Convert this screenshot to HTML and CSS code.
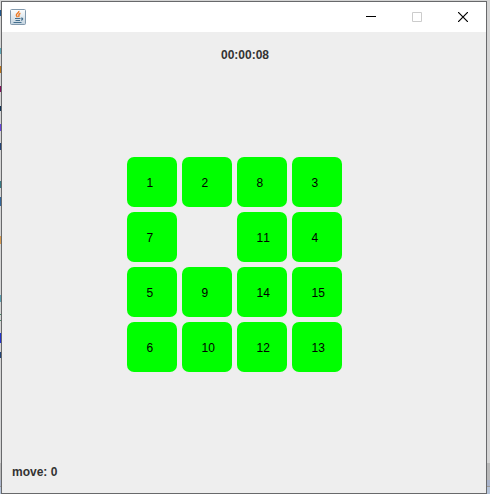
FILE: index.html
```html
<!DOCTYPE html>
<html lang="en">
<head>
<meta charset="utf-8">
<title>Puzzle</title>
<link rel="stylesheet" href="styles.css">
</head>
<body>
<div class="window">
  <header class="titlebar">
    <svg class="app-icon" viewBox="0 0 16 16" aria-hidden="true">
      <defs><linearGradient id="plate" x1="0" y1="0" x2="0" y2="1"><stop offset="0" stop-color="#fdfefe"/><stop offset="1" stop-color="#c3d3df"/></linearGradient></defs>
      <rect x=".5" y=".5" width="15" height="15" rx="1" fill="url(#plate)" stroke="#8299ad"/>
      <path d="M8.800 2c.5 2-3 2.600-2.400 4.400.2.700.8 1.200 1 1.900M10.400 4.200C7.500 5.500 9.900 6.200 8.500 8" fill="none" stroke="#ee7a26" stroke-width="1.500"/>
      <path d="M5 9.500h5.500M5.500 11.500h4.500M3.500 13.500h8M11 9.200c2.500-.6 2 1.600 0 2.100" fill="none" stroke="#44708f" stroke-width="1.100"/>
    </svg>
    <div class="controls">
      <button class="control" aria-label="Minimize"><svg class="glyph" viewBox="0 0 10 10"><path d="M0 4.500h10" stroke="#000"/></svg></button>
      <button class="control" aria-label="Maximize" disabled><svg class="glyph" viewBox="0 0 10 10"><path d="M.5.5h9v9h-9z" fill="none" stroke="#ccc"/></svg></button>
      <button class="control" aria-label="Close"><svg class="glyph" viewBox="0 0 10 10"><path d="M0 0l10 10M10 0L0 10" stroke="#000" stroke-width="1.200"/></svg></button>
    </div>
  </header>
  <main class="game">
    <div class="timer">00:00:08</div>
    <div class="board">
      <button class="tile">1</button>
      <button class="tile">2</button>
      <button class="tile">8</button>
      <button class="tile">3</button>
      <button class="tile">7</button>
      <span class="gap"></span>
      <button class="tile">11</button>
      <button class="tile">4</button>
      <button class="tile">5</button>
      <button class="tile">9</button>
      <button class="tile">14</button>
      <button class="tile">15</button>
      <button class="tile">6</button>
      <button class="tile">10</button>
      <button class="tile">12</button>
      <button class="tile">13</button>
    </div>
    <div class="moves">move: 0</div>
  </main>
</div>
</body>
</html>
```

FILE: styles.css
```css
* {
  box-sizing: border-box;
}

/* Desktop behind the window: slivers of an editor on the left, a panel on the right */
body {
  margin: 0;
  min-height: 100vh;
  padding: 1px 3px 0 1px;
  display: flex;
  font-family: "Liberation Sans", Arial, sans-serif;
  font-size: 12px;
  line-height: 14px;
  font-kerning: none;
  color: #333;
  background:
    linear-gradient(#0000 10px, #258 10px 16px, #0000 16px 48px, #5ba5b5 48px 54px,
      #0000 54px 66px, #b87318 66px 73px, #0000 73px 86px, #80105a 86px 92px,
      #0000 92px 106px, #135 106px 111px, #0000 111px 124px, #64d 124px 131px,
      #0000 131px 143px, #247 143px 150px, #0000 150px 181px, #367883 181px 188px,
      #0000 188px 197px, #369 197px 206px, #0000 206px 236px, #d79b50 236px 244px,
      #0000 244px 295px, #5b9eb0 295px 302px, #0000 302px 314px, #486 314px 315px,
      #0000 315px 320px, #486 320px 321px, #0000 321px 333px, #23c 333px 343px,
      #0000 343px 352px, #247 352px 358px, #0000 358px) left top / 2px 100% no-repeat,
    linear-gradient(#d4d4d4 463px, #b8b8b8 463px 480px, #aab4cb 480px 486px, #999 486px 487px, #b4c3d9 487px);
}

.window {
  flex: 1;
  display: flex;
  flex-direction: column;
  border: 1px solid #68696b;
  background: #eee;
}

.titlebar {
  display: flex;
  align-items: center;
  justify-content: space-between;
  height: 30px;
  padding-left: 8px;
  background: #fff;
}

.app-icon {
  width: 16px;
  height: 16px;
}

.controls {
  display: flex;
  height: 100%;
}

.control {
  display: flex;
  align-items: center;
  justify-content: center;
  width: 46px;
  padding: 0;
  border: 0;
  background: none;
}

.glyph {
  width: 10px;
  height: 10px;
}

.game {
  flex: 1;
  display: flex;
  flex-direction: column;
  justify-content: space-between;
  padding: 16px 8px 14px 10px;
}

.timer,
.moves {
  font-weight: bold;
}

.timer {
  text-align: center;
}

.board {
  display: grid;
  grid-template-columns: repeat(4, 50px);
  grid-auto-rows: 50px;
  gap: 5px;
  align-self: center;
  margin: 2px 22px 0 0;
}

.tile {
  padding: 2px 0 0 20px;
  border: 0;
  border-radius: 7px;
  background: #0f0;
  color: #000;
  font: inherit;
  text-align: left;
}
```
